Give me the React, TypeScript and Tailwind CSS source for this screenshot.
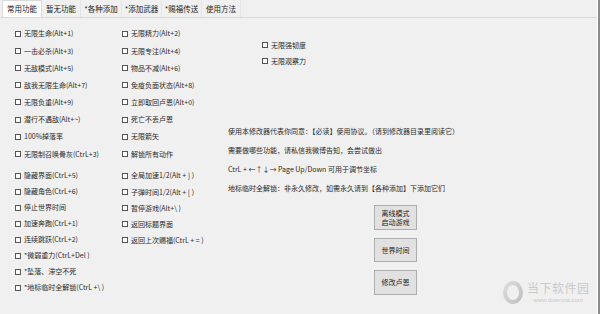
const font = { fontFamily: '"Noto Sans CJK SC", "Noto Sans", sans-serif' }

const tabs = [
  { label: '常用功能', w: 'w-[40px]' },
  { label: '暂无功能', w: 'w-[39px]' },
  { label: '*各种添加', w: 'w-[41px]' },
  { label: '*添加武器', w: 'w-[40px]' },
  { label: '*赐福传送', w: 'w-[40px]' },
  { label: '使用方法', w: 'w-[39px]' },
]

const leftTop = [
  '无限生命(Alt+1)',
  '一击必杀(Alt+3)',
  '无敌模式(Alt+5)',
  '敌我无限生命(Alt+7)',
  '无限负重(Alt+9)',
  '潜行不遇敌(Alt+~)',
  '100%掉落率',
  '无限制召唤骨灰(CtrL+3)',
]
const leftBottom = [
  '隐藏界面(CtrL+5)',
  '隐藏角色(CtrL+6)',
  '停止世界时间',
  '加速奔跑(CtrL+1)',
  '连续跳跃(CtrL+2)',
  '*微弱重力(CtrL+Del )',
  '*坠落、滞空不死',
  '*地标临时全解锁(CtrL +\\ )',
]
const midTop = [
  '无限精力(Alt+2)',
  '无限专注(Alt+4)',
  '物品不减(Alt+6)',
  '免疫负面状态(Alt+8)',
  '立即取回卢恩(Alt+0)',
  '死亡不丢卢恩',
  '无限箭矢',
  '解锁所有动作',
]
const midBottom = [
  '全局加速1/2(Alt + ] )',
  '子弹时间1/2(Alt + [ )',
  '暂停游戏(Alt+\\ )',
  '返回标题界面',
  '返回上次赐福(CtrL + = )',
]

function Check({ label, h }: { label: string; h: string }) {
  return (
    <label className={`flex items-center gap-[3px] ${h} whitespace-nowrap`}>
      <span className="w-[6px] h-[6px] border border-[#555] bg-white shrink-0" />
      <span>{label}</span>
    </label>
  )
}

function Btn({ children, h }: { children: React.ReactNode; h: string }) {
  return (
    <button
      className={`w-[43px] ${h} bg-[#e1e1e1] border border-[#adadad] text-[7px] leading-[9px] text-[#222] flex flex-col items-center justify-center`}
    >
      {children}
    </button>
  )
}

export default function App() {
  return (
    <div
      style={font}
      className="relative w-[600px] h-[314px] overflow-hidden bg-[#f0f0f0] text-[#2a2a2a] text-[7px] border-r-[2px] border-[#8a8a8a]"
    >
      <div className="h-full border-r border-white">
        {/* tab strip */}
        <div className="flex h-[18px] pl-[2px] border-b border-[#dadada]">
          {tabs.map((t, i) => (
            <div
              key={t.label}
              className={`${t.w} h-[17px] flex items-center justify-center text-[7.5px] text-[#222] ${
                i === 0 ? 'bg-white border-x border-t border-[#dadada]' : 'border-r border-[#e4e4e4]'
              }`}
            >
              {t.label}
            </div>
          ))}
        </div>

        <div className="flex pt-[7px]">
          {/* left column */}
          <div className="w-[122px] pl-[15px] flex flex-col">
            {leftTop.map((l) => (
              <Check key={l} label={l} h="h-[17.2px]" />
            ))}
            <div className="h-[5px]" />
            {leftBottom.map((l) => (
              <Check key={l} label={l} h="h-[16px]" />
            ))}
          </div>

          {/* middle column */}
          <div className="w-[106px] flex flex-col">
            {midTop.map((l) => (
              <Check key={l} label={l} h="h-[17.2px]" />
            ))}
            <div className="h-[5px]" />
            {midBottom.map((l) => (
              <Check key={l} label={l} h="h-[16.2px]" />
            ))}
          </div>

          {/* right area */}
          <div className="flex-1 flex flex-col">
            <div className="pl-[34px] pt-[12px] flex flex-col">
              <Check label="无限强韧度" h="h-[16px]" />
              <Check label="无限观察力" h="h-[16px]" />
            </div>
            <div className="mt-[53px] flex flex-col leading-[19px] whitespace-nowrap">
              <div>使用本修改器代表你同意：【必读】使用协议。（请到修改器目录里阅读它）</div>
              <div>需要做哪些功能，请私信我微博告知，会尝试做出</div>
              <div>CtrL + ←↑↓→ Page Up/Down 可用于调节坐标</div>
              <div>地标临时全解锁：非永久修改，如需永久请到【各种添加】下添加它们</div>
            </div>
            <div className="mt-[7px] ml-[146px] flex flex-col gap-[8px]">
              <Btn h="h-[25px]">
                <span>离线模式</span>
                <span>启动游戏</span>
              </Btn>
              <Btn h="h-[24px]">世界时间</Btn>
              <Btn h="h-[25px]">修改卢恩</Btn>
            </div>
          </div>
        </div>
      </div>

      {/* watermark */}
      <div className="absolute left-[502px] top-[281px] flex items-start gap-[3px] pointer-events-none whitespace-nowrap">
        <svg width="22" height="23" viewBox="0 0 22 23">
          <defs>
            <linearGradient id="wm" x1="0" y1="0" x2="1" y2="1">
              <stop offset="0" stopColor="#dcdcdc" />
              <stop offset="1" stopColor="#c0c0c0" />
            </linearGradient>
          </defs>
          <ellipse cx="11" cy="11.5" rx="8" ry="9.5" fill="none" stroke="url(#wm)" strokeWidth="4" />
        </svg>
        <div className="flex flex-col items-center">
          <div className="text-[12px] leading-[14px] text-[#cacaca] tracking-[0.5px]">当下软件园</div>
          <div
            className="mt-[2px] text-[6px] leading-[7px] text-[#c8c8c8]"
            style={{ fontFamily: '"Liberation Sans", sans-serif' }}
          >
            www.downxia.com
          </div>
        </div>
      </div>
    </div>
  )
}
